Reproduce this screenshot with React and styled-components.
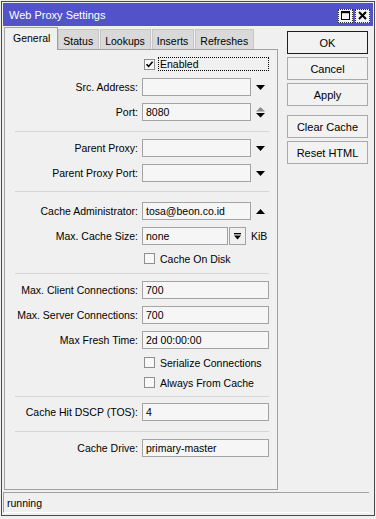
import styled, { createGlobalStyle } from "styled-components";

const GlobalStyle = createGlobalStyle`
  html, body {
    margin: 0;
    padding: 0;
    background: #f0f0f0;
  }
  body {
    font-family: "Liberation Sans", Arial, sans-serif;
    font-size: 10.5px;
    color: #000000;
  }
`;

function DownArrow() {
  return (
    <svg width="9" height="5" viewBox="0 0 9 5">
      <polygon points="0,0 9,0 4.5,5" fill="#000" />
    </svg>
  );
}

function UpArrow() {
  return (
    <svg width="9" height="5" viewBox="0 0 9 5">
      <polygon points="0,5 9,5 4.5,0" fill="#000" />
    </svg>
  );
}

function Spinner() {
  return (
    <svg width="9" height="11" viewBox="0 0 9 11">
      <polygon points="0,4.5 9,4.5 4.5,0" fill="#8c8c8c" />
      <polygon points="0,6 9,6 4.5,10.5" fill="#000" />
    </svg>
  );
}

function CheckMark() {
  return (
    <svg width="9" height="9" viewBox="0 0 9 9">
      <path d="M1.5 4.2 L3.6 6.4 L7.6 1.8" stroke="#000" strokeWidth="1.6" fill="none" />
    </svg>
  );
}

function Field({ label, value = "", width = 127, side, children }) {
  return (
    <Row>
      <Label>{label}</Label>
      <Input $w={width}>{value}</Input>
      {side && <ArrowSlot>{side}</ArrowSlot>}
      {children}
    </Row>
  );
}

function Check({ label, checked, focus }) {
  return (
    <CheckRow $h={focus ? 14 : 13}>
      <Box>{checked && <CheckMark />}</Box>
      <CheckText $focus={focus}>{label}</CheckText>
    </CheckRow>
  );
}

function App() {
  return (
    <>
      <GlobalStyle />
      <Window>
        <TitleBar>
          <span>Web Proxy Settings</span>
          <TitleButtons>
            <TitleButton>
              <svg width="9" height="9" viewBox="0 0 9 9">
                <rect x="0.5" y="0.5" width="8" height="8" fill="none" stroke="#000" />
                <rect x="0" y="0" width="9" height="2.2" fill="#000" />
              </svg>
            </TitleButton>
            <TitleButton>
              <svg width="9" height="9" viewBox="0 0 9 9">
                <path d="M1 1 L8 8 M8 1 L1 8" stroke="#000" strokeWidth="2" />
              </svg>
            </TitleButton>
          </TitleButtons>
        </TitleBar>

        <Body>
          <LeftColumn>
            <TabRow>
              <Tab $active>General</Tab>
              <Tab>Status</Tab>
              <Tab>Lookups</Tab>
              <Tab>Inserts</Tab>
              <Tab>Refreshes</Tab>
            </TabRow>
            <Panel>
              <Group $pt={7} $pb={10}>
                <Check label="Enabled" checked focus />
                <Field label="Src. Address:" width={109} side={<DownArrow />} />
                <Field label="Port:" value="8080" width={109} side={<Spinner />} />
              </Group>
              <Divider />
              <Group $pt={7} $pb={9}>
                <Field label="Parent Proxy:" width={109} side={<DownArrow />} />
                <Field label="Parent Proxy Port:" width={109} side={<DownArrow />} />
              </Group>
              <Divider />
              <Group $pt={10} $pb={8}>
                <Field
                  label="Cache Administrator:"
                  value="tosa@beon.co.id"
                  width={109}
                  side={<UpArrow />}
                />
                <Field label="Max. Cache Size:" value="none" width={86}>
                  <SizeButton>
                    <svg width="7" height="7" viewBox="0 0 7 7">
                      <rect x="0" y="0" width="7" height="1.3" fill="#000" />
                      <polygon points="0,2.4 7,2.4 3.5,6.6" fill="#000" />
                    </svg>
                  </SizeButton>
                  <Unit>KiB</Unit>
                </Field>
                <Check label="Cache On Disk" />
              </Group>
              <Divider />
              <Group $pt={7} $pb={7}>
                <Field label="Max. Client Connections:" value="700" />
                <Field label="Max. Server Connections:" value="700" />
                <Field label="Max Fresh Time:" value="2d 00:00:00" />
                <Check label="Serialize Connections" />
                <Check label="Always From Cache" />
              </Group>
              <Divider />
              <Group $pt={6} $pb={10}>
                <Field label="Cache Hit DSCP (TOS):" value="4" />
              </Group>
              <Divider />
              <Group $pt={7} $pb={0}>
                <Field label="Cache Drive:" value="primary-master" />
              </Group>
            </Panel>
          </LeftColumn>

          <RightColumn>
            <ActionButton $focus>OK</ActionButton>
            <ActionButton>Cancel</ActionButton>
            <ActionButton>Apply</ActionButton>
            <ActionButton $spaced>Clear Cache</ActionButton>
            <ActionButton>Reset HTML</ActionButton>
          </RightColumn>
        </Body>

        <StatusBar>running</StatusBar>
      </Window>
    </>
  );
}

const Window = styled.div`
  box-sizing: border-box;
  margin: 1px 0 0 1px;
  width: 374px;
  height: 515px;
  padding: 1px;
  border: 1px solid #4a4a4a;
  background: #f0f0f0;
  display: flex;
  flex-direction: column;
`;

const TitleBar = styled.div`
  height: 23px;
  flex-shrink: 0;
  display: flex;
  align-items: center;
  justify-content: space-between;
  padding: 0 3px 0 6px;
  background: #5253c8;
  color: #ffffff;
  font-size: 11px;
`;

const TitleButtons = styled.div`
  display: flex;
  gap: 2px;
  margin-top: 2px;
`;

const TitleButton = styled.div`
  box-sizing: border-box;
  width: 15px;
  height: 14px;
  display: flex;
  align-items: center;
  justify-content: center;
  background: #f4f4f4;
  border: 1px dotted #2a2a2a;
`;

const Body = styled.div`
  flex: 1;
  display: flex;
  padding: 1px 0 0 1px;
`;

const LeftColumn = styled.div`
  width: 274px;
  display: flex;
  flex-direction: column;
`;

const TabRow = styled.div`
  height: 22px;
  display: flex;
  align-items: flex-end;
`;

const Tab = styled.div`
  box-sizing: border-box;
  position: relative;
  display: flex;
  align-items: center;
  white-space: nowrap;
  height: ${p => (p.$active ? 23 : 20)}px;
  margin-bottom: ${p => (p.$active ? -1 : 0)}px;
  padding: ${p => (p.$active ? "0 7px 2px 8px" : "2px 5px 0 4px")};
  background: ${p => (p.$active ? "#f0f0f0" : "#d9d9d9")};
  border: 1px solid ${p => (p.$active ? "#a0a0a0" : "#c6c6c6")};
  border-bottom: none;
  margin-right: ${p => (p.$active ? 0 : 1)}px;
  z-index: ${p => (p.$active ? 1 : 0)};
  font-size: 10.5px;
`;

const Panel = styled.div`
  box-sizing: border-box;
  height: 441px;
  border: 1px solid #a0a0a0;
  display: flex;
  flex-direction: column;
`;

const Group = styled.div`
  display: flex;
  flex-direction: column;
  gap: 7px;
  padding: ${p => p.$pt}px 0 ${p => p.$pb}px;
`;

const Divider = styled.div`
  height: 1px;
  margin: 0 8px 0 10px;
  background: #d6d6d6;
`;

const Row = styled.div`
  height: 18px;
  display: flex;
  align-items: center;
`;

const Label = styled.span`
  width: 133px;
  flex-shrink: 0;
  margin-right: 4px;
  text-align: right;
  white-space: nowrap;
`;

const Input = styled.div`
  box-sizing: border-box;
  width: ${p => p.$w}px;
  height: 18px;
  padding-left: 3px;
  display: flex;
  align-items: center;
  border: 1px solid #a3a3a3;
  background: #f6f6f6;
  white-space: nowrap;
`;

const ArrowSlot = styled.div`
  width: 18px;
  height: 18px;
  display: flex;
  align-items: center;
  justify-content: center;
`;

const SizeButton = styled.div`
  box-sizing: border-box;
  width: 17px;
  height: 18px;
  margin-left: 1px;
  display: flex;
  align-items: center;
  justify-content: center;
  border: 1px solid #a3a3a3;
`;

const Unit = styled.span`
  margin-left: 5px;
`;

const CheckRow = styled.div`
  height: ${p => p.$h}px;
  display: flex;
  align-items: center;
  padding: 0 8px 0 139px;
`;

const Box = styled.div`
  box-sizing: border-box;
  width: 11px;
  height: 11px;
  flex-shrink: 0;
  display: flex;
  align-items: center;
  justify-content: center;
  border: 1px solid #8e8f8f;
  background: #f8f8f8;
`;

const CheckText = styled.span`
  box-sizing: border-box;
  white-space: nowrap;
  margin-left: ${p => (p.$focus ? 3 : 5)}px;
  ${p =>
    p.$focus &&
    `
    flex: 1;
    height: 14px;
    display: flex;
    align-items: center;
    padding-left: 1px;
    border: 1px dotted #000000;
  `}
`;

const RightColumn = styled.div`
  margin-left: 9px;
  padding-top: 4px;
  display: flex;
  flex-direction: column;
  gap: 3px;
`;

const ActionButton = styled.div`
  box-sizing: border-box;
  width: 81px;
  height: 23px;
  margin-top: ${p => (p.$spaced ? 6 : 0)}px;
  display: flex;
  align-items: center;
  justify-content: center;
  border: 1px solid ${p => (p.$focus ? "#1e1e1e" : "#a9a9a9")};
  background: #f2f2f2;
  font-size: 11px;
`;

const StatusBar = styled.div`
  box-sizing: border-box;
  width: 366px;
  height: 21px;
  margin-bottom: 1px;
  padding-left: 3px;
  display: flex;
  align-items: center;
  border-top: 1px solid #a0a0a0;
  border-left: 1px solid #a0a0a0;
  border-bottom: 1px solid #ffffff;
`;

export default App;
